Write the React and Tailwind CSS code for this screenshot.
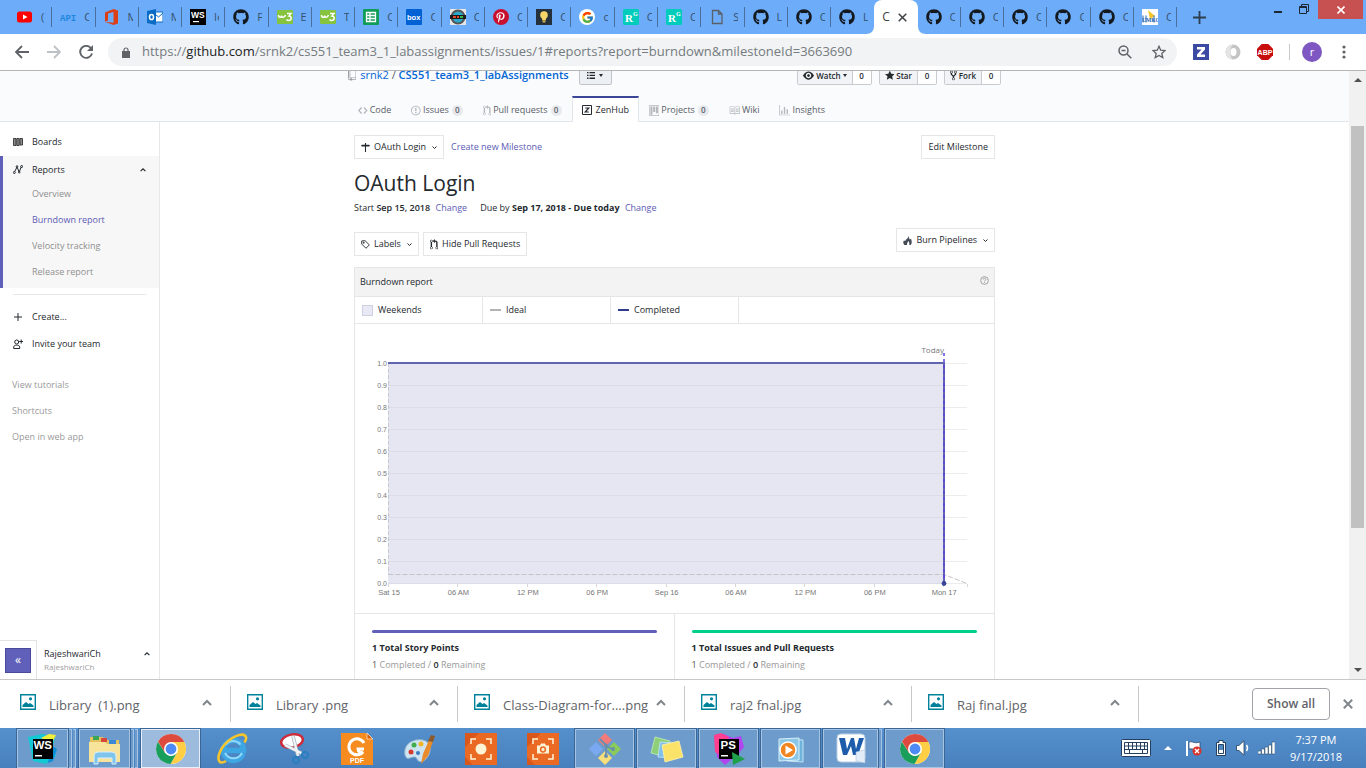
import React from "react";
import { FaGithub, FaPinterestP } from "react-icons/fa";
import { FcGoogle } from "react-icons/fc";

const OCT = {
  repo: [12, "M4 9H3V8h1v1zm0-3H3v1h1V6zm0-2H3v1h1V4zm0-2H3v1h1V2zm8-1v12c0 .55-.45 1-1 1H6v2l-1.5-1.5L3 16v-2H1c-.55 0-1-.45-1-1V1c0-.55.45-1 1-1h10c.55 0 1 .45 1 1zm-1 10H1v2h2v-1h3v1h5v-2zm0-10H2v9h9V1z"],
  code: [14, "M9.5 3L8 4.5 11.5 8 8 11.5 9.5 13 14 8 9.5 3zm-5 0L0 8l4.5 5L6 11.5 2.5 8 6 4.5 4.5 3z"],
  issue: [14, "M7 2.3c3.14 0 5.7 2.56 5.7 5.7s-2.56 5.7-5.7 5.7A5.71 5.71 0 0 1 1.3 8c0-3.14 2.56-5.7 5.7-5.7zM7 1C3.14 1 0 4.14 0 8s3.14 7 7 7 7-3.14 7-7-3.14-7-7-7zm1 3H6v5h2V4zm0 6H6v2h2v-2z"],
  pull: [12, "M11 11.28V5c-.03-.78-.34-1.47-.94-2.06C9.46 2.35 8.78 2.03 8 2H7V0L4 3l3 3V4h1c.27.02.48.11.69.31.21.2.3.42.31.69v6.28A1.993 1.993 0 0 0 10 15a1.993 1.993 0 0 0 1-3.72zm-1 2.92c-.66 0-1.2-.55-1.2-1.2 0-.65.55-1.2 1.2-1.2.65 0 1.2.55 1.2 1.2 0 .65-.55 1.2-1.2 1.2zM4 3c0-1.11-.89-2-2-2a1.993 1.993 0 0 0-1 3.72v6.56A1.993 1.993 0 0 0 2 15a1.993 1.993 0 0 0 1-3.72V4.72c.59-.34 1-.98 1-1.72zm-.8 10c0 .66-.55 1.2-1.2 1.2-.65 0-1.2-.55-1.2-1.2 0-.65.55-1.2 1.2-1.2.65 0 1.2.55 1.2 1.2zM2 4.2C1.34 4.2.8 3.65.8 3c0-.65.55-1.2 1.2-1.2.65 0 1.2.55 1.2 1.2 0 .65-.55 1.2-1.2 1.2z"],
  project: [15, "M10 12h3V2h-3v10zm-4-2h3V2H6v8zm-4 4h3V2H2v12zm-1 1h13V1H1v14zM14 0H1a1 1 0 0 0-1 1v14a1 1 0 0 0 1 1h13a1 1 0 0 0 1-1V1a1 1 0 0 0-1-1z"],
  book: [16, "M3 5h4v1H3V5zm0 3h4V7H3v1zm0 2h4V9H3v1zm11-5h-4v1h4V5zm0 2h-4v1h4V7zm0 2h-4v1h4V9zm2-6v9c0 .55-.45 1-1 1H9.5l-1 1-1-1H2c-.55 0-1-.45-1-1V3c0-.55.45-1 1-1h5.5l1 1 1-1H15c.55 0 1 .45 1 1zm-8 .5L7.5 3H2v9h6V3.5zm7-.5H9.5l-.5.5V12h6V3z"],
  graph: [16, "M16 14v1H0V0h1v14h15zM5 13H3V8h2v5zm4 0H7V3h2v10zm4 0h-2V6h2v7z"],
  eye: [16, "M8.06 2C3 2 0 8 0 8s3 6 8.06 6C13 14 16 8 16 8s-3-6-7.94-6zM8 12c-2.2 0-4-1.78-4-4 0-2.2 1.8-4 4-4 2.22 0 4 1.8 4 4 0 2.22-1.78 4-4 4zm2-4c0 1.11-.89 2-2 2-1.11 0-2-.89-2-2 0-1.11.89-2 2-2 1.11 0 2 .89 2 2z"],
  star: [14, "M14 6l-4.9-.64L7 1 4.9 5.36 0 6l3.6 3.26L2.67 14 7 11.67 11.33 14l-.93-4.74z"],
  fork: [10, "M8 1a1.993 1.993 0 0 0-1 3.72V6L5 8 3 6V4.72A1.993 1.993 0 0 0 2 1a1.993 1.993 0 0 0-1 3.72V6.5l3 3v1.78A1.993 1.993 0 0 0 5 15a1.993 1.993 0 0 0 1-3.72V9.5l3-3V4.72A1.993 1.993 0 0 0 8 1zM2 4.2C1.34 4.2.8 3.65.8 3c0-.65.55-1.2 1.2-1.2.65 0 1.2.55 1.2 1.2 0 .65-.55 1.2-1.2 1.2zm3 10c-.66 0-1.2-.55-1.2-1.2 0-.65.55-1.2 1.2-1.2.65 0 1.2.55 1.2 1.2 0 .65-.55 1.2-1.2 1.2zm3-10c-.66 0-1.2-.55-1.2-1.2 0-.65.55-1.2 1.2-1.2.65 0 1.2.55 1.2 1.2 0 .65-.55 1.2-1.2 1.2z"],
};

function Oct({ name, className = "" }) {
  const [w, d] = OCT[name];
  return (
    <svg viewBox={`0 0 ${w} 16`} className={`h-[11px] shrink-0 ${className}`} fill="currentColor" aria-hidden="true">
      <path d={d} fillRule={name === "project" ? "evenodd" : "nonzero"} />
    </svg>
  );
}

function Chevron({ up = false, className = "h-[5px] w-[5px]" }) {
  return (
    <svg viewBox="0 0 10 10" className={`shrink-0 ${className}`} fill="none" stroke="currentColor" strokeWidth="2" aria-hidden="true">
      <path d={up ? "M1 7l4-4 4 4" : "M1 3l4 4 4-4"} />
    </svg>
  );
}

/* ---------- browser tabs ---------- */

const Octocat = () => <FaGithub className="h-4 w-4 text-[#14191f]" />;

function Fav({ kind }) {
  if (kind === "git") return <Octocat />;
  if (kind === "google")
    return (
      <span className="flex h-4 w-4 items-center justify-center rounded-full bg-white">
        <FcGoogle className="h-[13px] w-[13px]" />
      </span>
    );
  if (kind === "pin")
    return (
      <span className="flex h-4 w-4 items-center justify-center rounded-full bg-[#c8102e] text-white">
        <FaPinterestP className="h-[11px] w-[11px]" />
      </span>
    );
  const art = {
    yt: (
      <>
        <rect x="0" y="2.5" width="15" height="11" rx="2.5" fill="#f00" />
        <path d="M6 5.5l4.5 2.5L6 10.5z" fill="#fff" />
      </>
    ),
    api: <text x="0" y="11.5" fontSize="9" fontWeight="700" fontFamily="Liberation Mono, monospace" fill="#1d86e0">API</text>,
    office: <path d="M1 3.5L9.500 0 14 1.500v13L9.500 16 1 12.800l8.500 1V3L4 4.400v7L1 12.800z" fill="#dc3e15" />,
    outlook: (
      <>
        <rect x="7" y="3" width="9" height="10" fill="#fff" stroke="#0a6cc4" />
        <path d="M8 5l3.5 3L16 4" stroke="#0a6cc4" fill="none" />
        <path d="M0 2l9-2v16l-9-2z" fill="#0a6cc4" />
        <ellipse cx="4.5" cy="8" rx="2" ry="2.6" fill="none" stroke="#fff" strokeWidth="1.5" />
      </>
    ),
    ws: (
      <>
        <rect width="16" height="16" fill="#000" />
        <text x="1" y="8.5" fontSize="8.5" fontWeight="700" fontFamily="Liberation Sans, sans-serif" fill="#fff">WS</text>
        <rect x="3" y="12" width="6" height="1.2" fill="#fff" />
      </>
    ),
    w3: (
      <>
        <rect y="1" width="16" height="14" rx="1" fill="#86c440" />
        <path d="M1.5 6c0 3 3 3 3 .5 0 2.500 3 2.500 4-.5" fill="none" stroke="#fff" strokeWidth="1.500" />
        <path d="M10 4.5h4L12 7c3 0 3 4.500-.5 4.500-1 0-1.500-.5-2-1" fill="none" stroke="#fff" strokeWidth="1.500" />
      </>
    ),
    sheet: (
      <>
        <rect width="16" height="16" rx="1" fill="#109d58" />
        <path d="M3.5 3.5h9v9h-9zM3.5 6.5h9M3.5 9.5h9M7 3.5v9" stroke="#fff" strokeWidth="1.3" fill="none" />
      </>
    ),
    box: (
      <>
        <rect width="16" height="16" rx="1" fill="#0061d5" />
        <text x="1" y="11" fontSize="7.5" fontWeight="700" fontFamily="Liberation Sans, sans-serif" fill="#fff">box</text>
      </>
    ),
    badge: (
      <>
        <rect width="16" height="16" fill="#e8e8e8" />
        <circle cx="8" cy="8" r="7.5" fill="#555" />
        <circle cx="8" cy="8" r="5.5" fill="#2aa7c9" />
        <rect x="0" y="6" width="16" height="4" fill="#1c1c1c" />
        <path d="M3 8h3M7 8h2" stroke="#e04a2a" strokeWidth="2" />
        <path d="M10 8h3" stroke="#3db54a" strokeWidth="2" />
      </>
    ),
    bulb: (
      <>
        <rect width="16" height="16" fill="#24303c" />
        <circle cx="8" cy="6" r="3.8" fill="#f6d568" />
        <path d="M5.5 8.5h5l-1 3h-3z" fill="#f6d568" />
        <rect x="6.5" y="11.5" width="3" height="2" fill="#c8a850" />
      </>
    ),
    rg: (
      <>
        <rect width="16" height="16" rx="1.5" fill="#00ccbb" />
        <text x="2" y="13" fontSize="11" fontWeight="700" fontFamily="Liberation Serif, serif" fill="#fff">R</text>
        <text x="10" y="7" fontSize="6" fontWeight="700" fontFamily="Liberation Serif, serif" fill="#fff">G</text>
      </>
    ),
    file: <path d="M3.5 1.5h6l3.5 3.5v9.5h-9.500zM9.500 1.500V5H13" fill="none" stroke="#5a6068" strokeWidth="1.300" />,
    umkc: (
      <>
        <rect width="16" height="16" fill="#fff" />
        <path d="M6 1l7 6-5 3z" fill="#f5c62a" />
        <text x="0" y="13" fontSize="5.5" fontWeight="700" fontFamily="Liberation Serif, serif" fill="#1f63b0">UMKC</text>
        <path d="M1 6.500v7M4 6.500v7M12 6.500v7" stroke="#1f63b0" />
      </>
    ),
  }[kind];
  return (
    <svg viewBox="0 0 16 16" className="h-4 w-4 overflow-hidden" aria-hidden="true">
      {art}
    </svg>
  );
}

const TABS = [
  ["yt", "("], ["api", "C"], ["office", "M"], ["outlook", "M"], ["ws", "Id"], ["git", "F"], ["w3", "E"], ["w3", "T"],
  ["sheet", "C"], ["box", "C"], ["badge", "C"], ["pin", "C"], ["bulb", "C"], ["google", "c"], ["rg", "C"], ["rg", "C"],
  ["file", "S"], ["git", "L"], ["git", "C"], ["git", "L"], ["active", "C"], ["git", "C"], ["git", "C"], ["git", "C"],
  ["git", "C"], ["git", "C"], ["umkc", "C"],
];

function TabStrip() {
  return (
    <header className="flex h-[34px] shrink-0 bg-[#6cacf8]">
      <div role="tablist" className="flex min-w-0 flex-1 pl-[9px]">
        {TABS.map(([kind, label], i) =>
          kind === "active" ? (
            <div key={i} className="relative flex min-w-0 flex-1 items-center gap-2 rounded-t-lg bg-white pl-2 text-[12px] text-[#3c4043]">
              <svg viewBox="0 0 8 8" className="absolute bottom-0 -left-2 h-2 w-2" aria-hidden="true"><path d="M8 0v8H0c5 0 8-3 8-8z" fill="#fff" /></svg>
              <svg viewBox="0 0 8 8" className="absolute -right-2 bottom-0 h-2 w-2" aria-hidden="true"><path d="M0 0v8h8C3 8 0 5 0 0z" fill="#fff" /></svg>
              <button role="tab" aria-selected="true" className="w-2 text-left">{label}</button>
              <button aria-label="Close tab">
                <svg viewBox="0 0 9 9" className="h-[9px] w-[9px]" stroke="#3c4043" strokeWidth="1.5"><path d="M.7.7l7.6 7.6M8.3.7L.7 8.3" /></svg>
              </button>
            </div>
          ) : (
            <button key={i} role="tab" aria-selected="false" className="flex min-w-0 flex-1 items-center pl-2">
              <span className="shrink-0"><Fav kind={kind} /></span>
              <span className="ml-2 w-[5px] overflow-hidden text-left text-[11px] text-[#37506e]">{label}</span>
              <span className={i === 19 ? "hidden" : "ml-auto h-[20px] w-px bg-[#4a6f9e]"} />
            </button>
          )
        )}
      </div>
      <div className="flex w-[189px] shrink-0 items-start">
        <button aria-label="New tab" className="mt-[11px] ml-4">
          <svg viewBox="0 0 13 13" className="h-[13px] w-[13px]" stroke="#2c3e50" strokeWidth="1.8"><path d="M6.5 0v13M0 6.5h13" /></svg>
        </button>
        <button aria-label="Minimize" className="ml-auto pt-[11px]"><span className="block h-[2px] w-2 bg-[#1c2836]" /></button>
        <button aria-label="Restore" className="ml-[17px] pt-1">
          <svg viewBox="0 0 10 10" className="h-[10px] w-[10px]" fill="none" stroke="#1c2836"><path d="M.5 2.5h7v7h-7zM.5 3.5h7M2.5 2V.5h7v7H8" /></svg>
        </button>
        <button aria-label="Close" className="mr-[3px] ml-[9px] flex h-[19px] w-[45px] items-center justify-center bg-[#c75050]">
          <svg viewBox="0 0 8 8" className="h-2 w-2" stroke="#fff" strokeWidth="1.6"><path d="M.5.5l7 7M7.5.5l-7 7" /></svg>
        </button>
      </div>
    </header>
  );
}

function Toolbar() {
  return (
    <div className="flex h-[37px] shrink-0 items-center border-b border-[#b5b5b5] bg-white pr-5 pl-[15px] text-[#5f6368]">
      <button aria-label="Back">
        <svg viewBox="0 0 14 14" className="h-[14px] w-[14px]" fill="none" stroke="#5f6368" strokeWidth="1.8"><path d="M14 7H1.5M7 1L1 7l6 6" /></svg>
      </button>
      <button aria-label="Forward" className="ml-[18px]">
        <svg viewBox="0 0 14 14" className="h-[14px] w-[14px]" fill="none" stroke="#bdc1c6" strokeWidth="1.8"><path d="M0 7h12.5M7 1l6 6-6 6" /></svg>
      </button>
      <button aria-label="Reload" className="ml-[18px]">
        <svg viewBox="0 0 14 14" className="h-[14px] w-[14px]" fill="none"><path d="M11.8 3A6 6 0 1 0 13 8.5" stroke="#5f6368" strokeWidth="1.9" /><path d="M14 0v6H8z" fill="#5f6368" /></svg>
      </button>
      <div className="ml-[15px] flex h-7 min-w-0 flex-1 items-center rounded-full bg-[#f1f3f4] pr-[11px] pl-[14px]">
        <svg viewBox="0 0 8 11" className="h-[11px] w-2 shrink-0" aria-hidden="true"><path d="M0 4h8v7H0z" fill="#5f6368" /><path d="M2 4.5V3a2 2 0 0 1 4 0v1.5" fill="none" stroke="#5f6368" strokeWidth="1.2" /></svg>
        <p className="ml-3 min-w-0 flex-1 overflow-hidden text-[13px] whitespace-nowrap text-[#757b80]">
          https://<span className="text-[#202124]">github.com</span>/srnk2/cs551_team3_1_labassignments/issues/1#reports?report=burndown&amp;milestoneId=3663690
        </p>
        <button aria-label="Zoom">
          <svg viewBox="0 0 14 14" className="h-[14px] w-[14px]" fill="none" stroke="#5f6368" strokeWidth="1.5"><circle cx="5.5" cy="5.5" r="4.5" /><path d="M9 9l4.3 4.3M3.5 5.5h4" /></svg>
        </button>
        <button aria-label="Bookmark" className="ml-5">
          <svg viewBox="0 0 14 14" className="h-[14px] w-[14px]" fill="none" stroke="#5f6368" strokeWidth="1.3"><path d="M7 1.3l1.7 3.9 4.3.4-3.2 2.8 1 4.2L7 10.4l-3.8 2.2 1-4.2L1 5.6l4.3-.4z" /></svg>
        </button>
      </div>
      <button aria-label="ZenHub extension" className="ml-4">
        <svg viewBox="0 0 16 16" className="h-4 w-4"><rect width="16" height="16" fill="#3b4aa3" /><path d="M4 3h8v2.400L7.500 10.500H12V13H4v-2.400L8.500 5.500H4z" fill="#fff" /></svg>
      </button>
      <button aria-label="Extension" className="ml-4">
        <svg viewBox="0 0 16 16" className="h-4 w-4"><circle cx="8" cy="8" r="7.5" fill="#c4c4c4" /><path d="M8 .5a7.500 7.500 0 0 0 0 15c-3-1-4-12 0-15z" fill="#e4e4e4" /><ellipse cx="8.500" cy="8" rx="3" ry="4" fill="#fff" /></svg>
      </button>
      <button aria-label="AdBlock Plus" className="ml-4">
        <svg viewBox="0 0 16 16" className="h-4 w-4"><path d="M4.7 0h6.600L16 4.700v6.600L11.300 16H4.700L0 11.300V4.700z" fill="#c70d0d" /><text x="8" y="10.500" textAnchor="middle" fontSize="7" fontWeight="700" fontFamily="Liberation Sans, sans-serif" fill="#fff">ABP</text></svg>
      </button>
      <span className="ml-4 h-4 w-px bg-[#c8cacc]" />
      <button className="ml-3 h-5 w-5 rounded-full bg-[#7e57c2] text-[11px] leading-5 text-white">r</button>
      <button aria-label="Menu" className="ml-5">
        <svg viewBox="0 0 4 14" className="h-[14px] w-1" fill="#5f6368"><circle cx="2" cy="2" r="1.6" /><circle cx="2" cy="7" r="1.6" /><circle cx="2" cy="12" r="1.6" /></svg>
      </button>
    </div>
  );
}

/* ---------- repository header ---------- */

function SocialButton({ icon, label, caret }) {
  return (
    <div className="flex h-[19px] rounded-[2px] border border-[#c9cbcf] bg-white text-[8px] font-semibold text-[#24292e]">
      <button className="flex items-center gap-[2px] border-r border-[#c9cbcf] bg-[#f1f3f6] px-[5px]">
        <Oct name={icon} className="-my-1" />
        {label}
        {caret && <span className="border-x-[2px] border-t-[3px] border-x-transparent border-t-current" />}
      </button>
      <a href="#count" className="flex w-[18px] items-center justify-center">0</a>
    </div>
  );
}

const NAV = [
  ["code", "Code"], ["issue", "Issues", 0], ["pull", "Pull requests", 0], ["zen", "ZenHub"],
  ["project", "Projects", 0], ["book", "Wiki"], ["graph", "Insights"],
];

function RepoHeader() {
  return (
    <div className="shrink-0 border-b border-[#e1e4e8] bg-[#fafbfc] px-3">
      <div className="mx-auto max-w-[653px]">
        <div className="flex h-[14px] items-end overflow-hidden">
          <Oct name="repo" className="mb-1 text-[#9a9ea3]" />
          <h2 className="ml-1 text-[11px] leading-[20px] text-[#0366d6]">
            <a href="#owner">srnk2</a> <span className="text-[#586069]">/</span> <a href="#repo" className="font-semibold">CS551_team3_1_labAssignments</a>
          </h2>
          <button aria-label="Lists" className="ml-[10px] flex h-[19px] w-[33px] items-center justify-center gap-1 rounded-[2px] border border-[#c0c4ca] bg-[#eceff4] text-[#24292e]">
            <svg viewBox="0 0 8 7" className="h-[7px] w-2" fill="currentColor"><path d="M0 0h1.500v1.300H0zM2.500 0H8v1.300H2.500zM0 2.800h1.500v1.300H0zM2.500 2.800H8v1.300H2.500zM0 5.600h1.500v1.300H0zM2.500 5.600H8v1.300H2.500z" /></svg>
            <span className="border-x-[2px] border-t-[3px] border-x-transparent border-t-current" />
          </button>
          <div className="ml-auto flex gap-[7px]">
            <SocialButton icon="eye" label="Watch" caret />
            <SocialButton icon="star" label="Star" />
            <SocialButton icon="fork" label="Fork" />
          </div>
        </div>
        <nav className="mt-[11px] -mb-px flex h-[26px] text-[9px] text-[#586069]">
          {NAV.map(([icon, label, count]) => (
            <a
              key={label}
              href={`#${label}`}
              className={
                icon === "zen"
                  ? "flex items-center gap-1 border-x border-t-2 border-x-[#e1e4e8] border-t-[#3b4796] bg-white px-[9px] text-[#24292e]"
                  : "flex items-center gap-[2px] px-[10px] pt-[2px]"
              }
            >
              {icon === "zen" ? (
                <svg viewBox="0 0 10 10" className="h-[10px] w-[10px]"><path d="M.5.5h9v9h-9z" fill="none" stroke="#24292e" /><path d="M3.2 3h3.600L3.200 7h3.600" fill="none" stroke="#24292e" strokeWidth="1.200" /></svg>
              ) : (
                <Oct name={icon} className="text-[#b4b8bd]" />
              )}
              {label}
              {count !== undefined && <span className="ml-px flex h-[11px] w-[11px] items-center justify-center rounded-full bg-[#e7e9ec] text-[8px] font-semibold">{count}</span>}
            </a>
          ))}
        </nav>
      </div>
    </div>
  );
}

/* ---------- ZenHub sidebar ---------- */

function Sidebar() {
  const row = "flex h-[27px] w-full items-center gap-[9px] pl-[13px] text-left";
  return (
    <aside className="flex w-40 shrink-0 flex-col border-r border-[#e8e8e8] bg-white pt-[6px] text-[9px] text-[#24292e]">
      <a href="#boards" className={row}>
        <svg viewBox="0 0 10 8" className="h-2 w-[10px]" fill="#8b8b8b" stroke="#333" strokeWidth=".9"><path d="M.5.5h2.500v7H.5zM3.800.5h2.400v7H3.800zM7 .5h2.500v6.500H7z" /></svg>
        Boards
      </a>
      <section className="mt-px border-l-3 border-[#6060ba] bg-[#f7f7f7] pb-[3px]">
        <button className="flex h-[25px] w-full items-center pt-[2px] pr-[13px] pl-[10px]">
          <svg viewBox="0 0 10 9" className="h-[9px] w-[10px]" fill="none" stroke="#24292e"><path d="M1.8 6.500L4 2l2.200 5 2-5" /><circle cx="1.300" cy="7.500" r="1" /><circle cx="4" cy="1.500" r=".8" /><circle cx="6.300" cy="7.200" r=".8" /><circle cx="8.700" cy="1.500" r="1" /></svg>
          <span className="ml-[9px]">Reports</span>
          <Chevron up className="ml-auto h-[6px] w-[6px]" />
        </button>
        <ul className="pl-[29px] leading-[26px] text-[#8f8f8f]">
          <li><a href="#overview">Overview</a></li>
          <li><a href="#burndown" className="text-[#5d5bb5]">Burndown report</a></li>
          <li><a href="#velocity">Velocity tracking</a></li>
          <li><a href="#release">Release report</a></li>
        </ul>
      </section>
      <hr className="mx-[13px] mt-[6px] mb-2 border-[#e8e8e8]" />
      <button className={row}>
        <svg viewBox="0 0 10 10" className="h-[10px] w-[10px]" stroke="#24292e"><path d="M5 1v8M1 5h8" /></svg>
        Create...
      </button>
      <button className={row}>
        <svg viewBox="0 0 10 10" className="h-[10px] w-[10px]" fill="none" stroke="#24292e"><circle cx="3.7" cy="3" r="2" /><path d="M.7 9.500V8c0-2.500 6-2.500 6 0v1.500zM8.200.5v4M6.200 2.500h4" /></svg>
        Invite your team
      </button>
      <ul className="mt-[15px] pl-3 leading-[26px] text-[#9a9a9a]">
        <li><a href="#tutorials">View tutorials</a></li>
        <li><a href="#shortcuts">Shortcuts</a></li>
        <li><a href="#webapp">Open in web app</a></li>
      </ul>
      <div className="mt-auto flex h-[39px] items-stretch">
        <div className="flex w-[37px] items-center justify-center border-t border-r border-[#e3e3e3]">
          <button aria-label="Collapse sidebar" className="flex h-[25px] w-[26px] items-center justify-center border border-[#4a4a9c] bg-[#6060ba] text-[12px] text-white">«</button>
        </div>
        <button className="flex flex-1 items-center justify-between pr-[9px] pl-[7px] text-left">
          <span className="leading-[13px]">RajeshwariCh<span className="block text-[8px] leading-[13px] text-[#a0a0a0]">RajeshwariCh</span></span>
          <Chevron up className="mb-3 h-[6px] w-[6px]" />
        </button>
      </div>
    </aside>
  );
}

/* ---------- burndown report ---------- */

const X_LABELS = ["Sat 15", "06 AM", "12 PM", "06 PM", "Sep 16", "06 AM", "12 PM", "06 PM", "Mon 17"];
const Y_LABELS = ["1.0", "0.9", "0.8", "0.7", "0.6", "0.5", "0.4", "0.3", "0.2", "0.1", "0.0"];

function Chart() {
  return (
    <svg viewBox="0 0 639 289" className="block h-auto w-full" fontFamily="Liberation Sans, Arial, sans-serif" fontSize="7" fill="#777">
      <rect x="33" y="39" width="556" height="220" fill="#e6e6f2" />
      {Y_LABELS.map((t, i) => (
        <g key={t}>
          <path d={`M33 ${39.5 + i * 22}H589`} stroke="#dcdce8" />
          <path d={`M589 ${39.5 + i * 22}H612`} stroke="#ececec" />
          <text x="32" y={41.5 + i * 22} textAnchor="end">{t}</text>
        </g>
      ))}
      {X_LABELS.map((t, i) => (
        <g key={i}>
          <path d={`M${Math.round(33 + i * 69.4) + 0.5} 260v3`} stroke="#d8d8d8" />
          <text x={34 + i * 69.4} y="271" textAnchor="middle" fontSize="7.5">{t}</text>
        </g>
      ))}
      <path d="M612.5 260v3" stroke="#d8d8d8" />
      <path d="M33.5 39v211.5" fill="none" stroke="#c8c8d0" strokeDasharray="4 2" />
      <path d="M33.5 250.500H589l23 9" fill="none" stroke="#c4c4c8" strokeDasharray="5 2" />
      <path d="M33 39H589V259" fill="none" stroke="#6165b0" strokeWidth="2" />
      <path d="M589 29V259" stroke="#5b3fe0" strokeWidth="2" strokeDasharray="3 3" opacity=".75" />
      <circle cx="589" cy="259.5" r="2.4" fill="#3b4796" />
      <text x="589" y="29" textAnchor="end" fontSize="8" fontFamily="Open Sans, sans-serif">Today</text>
    </svg>
  );
}

function Stat({ total, bar }) {
  return (
    <div className="px-[17px] pt-4 pb-5">
      <div className={`h-[3px] rounded-sm ${bar}`} />
      <h3 className="mt-[6px] text-[9px] leading-[17px] font-bold text-[#24292e]">{total}</h3>
      <p className="text-[9px] leading-[17px] text-[#999]">
        <span className="text-[#555]">1</span> Completed / <b className="font-semibold text-[#24292e]">0</b> Remaining
      </p>
    </div>
  );
}

function Main() {
  const btn = "flex h-6 items-center gap-1 border border-[#e6e6e6] bg-white px-[6px] text-[#24292e]";
  const legend = "flex w-32 items-center gap-[5px] border-r border-[#e6e6e6] px-[7px]";
  return (
    <main className="min-w-0 flex-1 overflow-hidden pr-40 text-[9px] text-[#24292e]">
      <div className="mx-auto max-w-[641px] pt-[13px]">
        <div className="flex items-center">
          <button className={btn}>
            <svg viewBox="0 0 10 10" className="h-[9px] w-[9px]" fill="#24292e"><path d="M4.4 0h1.200v2H9L10 3 9 4H5.600v6H4.400V4H1L0 3l1-1h3.400z" /></svg>
            <span className="mr-[2px]">OAuth Login</span>
            <Chevron />
          </button>
          <a href="#new" className="ml-[7px] text-[#5d5bb5]">Create new Milestone</a>
          <button className={`${btn} ml-auto`}>Edit Milestone</button>
        </div>
        <h1 className="mt-2 text-[21px] leading-8">OAuth Login</h1>
        <div className="flex h-[18px] items-center gap-[13px]">
          <span>Start <b className="font-semibold">Sep 15, 2018</b> <a href="#start" className="ml-[3px] text-[#5d5bb5]">Change</a></span>
          <span>Due by <b className="font-bold">Sep 17, 2018 - Due today</b> <a href="#due" className="ml-[3px] text-[#5d5bb5]">Change</a></span>
        </div>
        <div className="mt-[11px] flex h-7 items-start gap-1">
          <button className={`${btn} self-end`}>
            <svg viewBox="0 0 10 10" className="h-[9px] w-[9px]" fill="none" stroke="#24292e"><path d="M.8 1v3.500l4.700 4.700 3.800-3.700L4.600.8zM2.500 2.500h1v1h-1z" /></svg>
            <span className="mr-[2px]">Labels</span>
            <Chevron />
          </button>
          <button className={`${btn} self-end`}>
            <Oct name="pull" />
            Hide Pull Requests
          </button>
          <button className={`${btn} ml-auto`}>
            <svg viewBox="0 0 10 10" className="h-[9px] w-[9px]" fill="#444d56"><path d="M6.500 0c.3 2 .5 3 1 4L9 3c1 3 1 5.500-.5 7H7c.3-2-.2-3-1-4.500C5 7 4.300 8 4.500 10H1.500C0 8 0 6.500 1 5l1.500.5C3 3.500 6 2.500 6.500 0z" /></svg>
            <span className="mr-[2px]">Burn Pipelines</span>
            <Chevron />
          </button>
        </div>
        <section className="mt-[11px] border border-[#e6e6e6]">
          <div className="flex h-[29px] items-center justify-between border-b border-[#e6e6e6] bg-[#f3f3f3] px-[5px]">
            <h2>Burndown report</h2>
            <button aria-label="Help" className="mb-1">
              <svg viewBox="0 0 10 10" className="h-[9px] w-[9px]" fill="none" stroke="#999"><circle cx="5" cy="5" r="4.3" /><path d="M3.5 4c0-2 3-2 3 0 0 1-1.500 1-1.500 2M5 6.800v1" /></svg>
            </button>
          </div>
          <div className="flex h-[27px] border-b border-[#e6e6e6]">
            <div className={legend}><span className="h-[11px] w-[11px] border border-[#cfcfe4] bg-[#e9e9f5]" />Weekends</div>
            <div className={legend}><span className="h-[2px] w-[11px] bg-[#b4b4b4]" />Ideal</div>
            <div className={legend}><span className="h-[2px] w-[11px] bg-[#323c8c]" />Completed</div>
          </div>
          <Chart />
          <div className="grid grid-cols-2 divide-x divide-[#e6e6e6] border-t border-[#e6e6e6]">
            <Stat total="1 Total Story Points" bar="bg-[#6060ba]" />
            <Stat total="1 Total Issues and Pull Requests" bar="bg-[#00d08a]" />
          </div>
        </section>
      </div>
    </main>
  );
}

function ScrollRail() {
  return (
    <div className="flex w-[17px] shrink-0 flex-col items-center bg-[#f1f1f1]" aria-hidden="true">
      <span className="mt-[7px] border-x-4 border-b-4 border-x-transparent border-b-[#505050]" />
      <span className="mt-11 h-[402px] w-[13px] bg-[#c1c1c1]" />
      <span className="mt-auto mb-[7px] border-x-4 border-t-4 border-x-transparent border-t-[#505050]" />
    </div>
  );
}

/* ---------- downloads shelf ---------- */

const FILES = ["Library  (1).png", "Library .png", "Class-Diagram-for....png", "raj2 fnal.jpg", "Raj final.jpg"];

function Downloads() {
  return (
    <footer className="flex h-[49px] shrink-0 items-center border-t border-[#c8c8c8] bg-white pl-1">
      {FILES.map((f) => (
        <div key={f} className="flex h-9 w-[227px] items-center border-r border-[#c8c8c8] pr-[18px] pl-4">
          <svg viewBox="0 0 16 16" className="mb-[4px] h-4 w-4 shrink-0" aria-hidden="true"><path d="M.7.7h14.600v14.600H.7z" fill="#fff" stroke="#00829b" strokeWidth="1.400" /><path d="M2.500 13v-2L6 8l2.500 2 1.500-1 3.500 2.500V13z" fill="#00829b" /><circle cx="10.500" cy="4.800" r="1.600" fill="#00829b" /></svg>
          <button className="ml-[13px] min-w-0 flex-1 pt-1 text-left text-[13px] whitespace-pre text-[#5f6368]">{f}</button>
          <button aria-label={`Options for ${f}`} className="mb-[2px] text-[#80868b]"><Chevron up className="h-[10px] w-[10px]" /></button>
        </div>
      ))}
      <button className="ml-auto h-8 w-[78px] rounded-[4px] border border-[#a0a4a8] text-[12px] font-semibold text-[#5f6368]">Show all</button>
      <button aria-label="Close downloads bar" className="mr-[13px] ml-[13px]">
        <svg viewBox="0 0 10 10" className="h-[10px] w-[10px]" stroke="#80868b" strokeWidth="2"><path d="M.8.8l8.400 8.400M9.200.8L.8 9.200" /></svg>
      </button>
    </footer>
  );
}

/* ---------- Windows taskbar ---------- */

const Chrome = () => (
  <>
    <circle cx="16" cy="16" r="15" fill="#fff" />
    <path d="M16 9h13.300A15 15 0 0 1 15.500 31l6.600-11.500z" fill="#ffce44" />
    <path d="M2.900 8.700L9.900 19.500 16 23l6-3.500L15.500 31A15 15 0 0 1 2.900 8.700z" fill="#1a9e5b" />
    <path d="M3 8.500A15 15 0 0 1 29.300 9H16l-6.100 10.500z" fill="#dd4b3e" />
    <circle cx="16" cy="16" r="7" fill="#fff" />
    <circle cx="16" cy="16" r="5.4" fill="#4c8bf5" />
  </>
);

const APPS = [
  { name: "WebStorm", open: true, stack: 2, art: (
    <>
      <path d="M1 4l14-3 13 3-2 10 3 9-10 8-13-3z" fill="#14c8d4" /><path d="M14 5l8-4 7 1-4 8z" fill="#f2ee3c" /><path d="M24 12l6 4-4 12-5 2z" fill="#0a8fd8" />
      <rect x="6" y="6" width="20" height="20" fill="#000" /><text x="6.500" y="16" fontSize="11.500" fontWeight="700" fontFamily="Liberation Sans, sans-serif" fill="#fff">WS</text><rect x="8" y="22" width="7" height="1.500" fill="#fff" />
    </>
  ) },
  { name: "File Explorer", open: true, stack: 2, art: (
    <>
      <path d="M1 4h13l2 3h14v22H1z" fill="#e6c35f" /><path d="M4 3h6v4H4z" fill="#3aa757" /><path d="M12 5h6v4h-6z" fill="#d9463a" /><path d="M20 7h7v4h-7z" fill="#3b87d8" />
      <path d="M0 9h16l2 2h13v18H0z" fill="#f7e39a" /><path d="M5 31V23q0-4 4-4h14q4 0 4 4v8h-4v-6H9v6z" fill="#7fc4ea" stroke="#d6f0ff" />
    </>
  ) },
  { name: "Chrome", active: true, art: <Chrome /> },
  { name: "Internet Explorer", art: (
    <>
      <path d="M26 20.500a10 10 0 1 1 .5-3H9" fill="none" stroke="#3fa6e4" strokeWidth="5.500" />
      <path d="M25 20a9.500 9.500 0 0 1-17 0M8.500 11.500a10 10 0 0 1 15 0" fill="none" stroke="#8fd8fa" strokeWidth="2" />
      <path d="M9 28C1 33-1 25 5 15 12 4 27-2 29 4c.5 2-.5 4-1.500 5.500" fill="none" stroke="#f5c52e" strokeWidth="2.600" />
    </>
  ) },
  { name: "Snipping Tool", art: (
    <>
      <ellipse cx="13" cy="8" rx="11" ry="6.500" transform="rotate(-12 13 8)" fill="#fff" stroke="#cc2c3a" strokeWidth="2.500" />
      <path d="M6 12l18 9M14 3l5 20" stroke="#aeb8c2" strokeWidth="3.500" /><path d="M6 12l18 9M14 3l5 20" stroke="#f2f5f7" strokeWidth="2" /><circle cx="17" cy="27" r="3" fill="none" stroke="#2d7fc0" strokeWidth="2.500" /><circle cx="26" cy="22" r="3" fill="none" stroke="#2d7fc0" strokeWidth="2.500" />
    </>
  ) },
  { name: "Foxit PDF", art: (
    <>
      <path d="M0 0h25l7 7v25H0z" fill="#f68b1f" /><path d="M26 0l6 6h-6z" fill="#e06000" stroke="#fff" strokeWidth=".6" />
      <path d="M23 10a8 8 0 1 0-1 9c-2 1-5 0-5-3h6" fill="none" stroke="#fff" strokeWidth="3" /><text x="16" y="30" textAnchor="middle" fontSize="7" fontWeight="700" fontFamily="Liberation Sans, sans-serif" fill="#fff">PDF</text>
    </>
  ) },
  { name: "Paint", art: (
    <>
      <path d="M2 22C0 12 9 5 20 7c9 2 9 13 3 19-4 4-8 3-9 0s-4-2-7-1-4 0-5-3z" fill="#cfe4f2" stroke="#8fb2cc" />
      <circle cx="8" cy="19" r="2.5" fill="#d63a2e" /><circle cx="11" cy="12" r="2.500" fill="#3fae49" /><circle cx="18" cy="11" r="2.500" fill="#f0b429" /><circle cx="15" cy="20" r="2" fill="#3c7ac0" />
      <path d="M18 31l2-10 6-14 4 1-5 15z" fill="#e98a2b" /><path d="M25 8l3-6 4 1-2 6z" fill="#8a5a2e" />
    </>
  ) },
  { name: "Screen Recorder", art: (
    <>
      <rect width="32" height="32" fill="#ea6a23" /><path d="M0 14L14 0H0zM0 32v-8L8 32z" fill="#d9571a" /><circle cx="16" cy="16" r="5.5" fill="#fff3d6" />
      <path d="M6 11V6h5M21 6h5v5M26 21v5h-5M11 26H6v-5" fill="none" stroke="#fff3d6" strokeWidth="1.5" />
    </>
  ) },
  { name: "Screen Capture", art: (
    <>
      <rect width="32" height="32" fill="#ea6a23" /><path d="M0 14L14 0H0zM0 32v-8L8 32z" fill="#d9571a" /><path d="M10 12.5h3l1-2h4l1 2h3v8H10z" fill="#fff3d6" /><circle cx="16" cy="16.500" r="2.400" fill="#fff3d6" stroke="#ea6a23" strokeWidth="1.500" />
      <path d="M6 11V6h5M21 6h5v5M26 21v5h-5M11 26H6v-5" fill="none" stroke="#fff3d6" strokeWidth="1.5" />
    </>
  ) },
  { name: "Git", open: true, art: (
    <>
      <path d="M16 0l7 7-7 7-7-7z" fill="#f27a7a" /><path d="M7 9l7 7-7 7-7-7z" fill="#7aa9f2" /><path d="M25 9l7 7-7 7-7-7z" fill="#8acb5a" /><path d="M16 18l7 7-7 7-7-7z" fill="#f7e07a" />
      <path d="M11 6l6 6v11M17 13l6 3" stroke="#6b8fae" strokeWidth="1.800" fill="none" /><circle cx="17" cy="12.500" r="2" fill="#6b8fae" /><circle cx="17" cy="23" r="2" fill="#6b8fae" /><circle cx="24" cy="16" r="2" fill="#6b8fae" />
    </>
  ) },
  { name: "Sticky Notes", open: true, art: (
    <>
      <path d="M4 4l15 4-4 16-15-4z" fill="#8ed07a" stroke="#c4ecb4" strokeWidth=".8" /><path d="M9 9l14 1-2 15-14-1z" fill="#7fc0ea" stroke="#c6e6f8" strokeWidth=".8" /><path d="M11 12l17-4 4 16-18 5z" fill="#fbe36a" stroke="#fff3b0" strokeWidth=".8" />
    </>
  ) },
  { name: "PhpStorm", open: true, art: (
    <>
      <path d="M1 2l10-1 9 4 8-2 3 11-5 6-14 12-8-8z" fill="#b345f1" /><path d="M1 2l7-2 8 4-9 18-5-3z" fill="#ff3f8f" />
      <rect x="6" y="6" width="20" height="20" fill="#000" /><text x="7.500" y="16" fontSize="11.500" fontWeight="700" fontFamily="Liberation Sans, sans-serif" fill="#fff">PS</text><rect x="8" y="22" width="7" height="1.500" fill="#fff" /><path d="M19 19l13 7-12 6z" fill="#1fa04a" />
    </>
  ) },
  { name: "Media Player", open: true, art: (
    <>
      <path d="M12 6l16 1v22l-16-1z" fill="#6fb4dc" stroke="#c6e4f4" /><path d="M4 6l20-1v22L4 28z" fill="#8cc6e6" stroke="#d8effa" />
      <circle cx="13" cy="17" r="8" fill="#f08522" stroke="#fff" strokeWidth="1.5" /><path d="M10.500 12.500l7.500 4.500-7.500 4.500z" fill="#fff" />
    </>
  ) },
  { name: "Word", open: true, stack: 1, art: (
    <>
      <rect x="2" y="1" width="28" height="28" rx="4" fill="#fff" stroke="#b9cfe6" /><path d="M4 5h6l2 11 4-11h3l2 11 3-11h5l-6 17h-5l-2-9-4 9H8z" fill="#1d5cab" /><path d="M21 19l9-2v13l-9-2z" fill="#e3edf7" stroke="#a9c1dc" strokeWidth=".6" />
    </>
  ) },
  { name: "Chrome", open: true, art: <Chrome /> },
];

function Taskbar() {
  return (
    <div className="flex h-10 shrink-0 items-stretch bg-gradient-to-b from-[#5590cc] to-[#4880bd] pl-[17px]">
      <div className="flex gap-[3px]">
        {APPS.map((a, i) => (
          <div key={i} className="flex w-[59px] pt-px">
            <button
              aria-label={a.name}
              className={
                a.active
                  ? "flex min-w-0 flex-1 items-center justify-center border border-[#e6f0fa] bg-[#9dbbdc] outline outline-[#3a6698]"
                  : a.open
                  ? "flex min-w-0 flex-1 items-center justify-center border border-[#a5c3e2] bg-[#6d9bcb] outline outline-[#3a6698]"
                  : "flex min-w-0 flex-1 items-center justify-center"
              }
            >
              <svg viewBox="0 0 32 32" className="h-8 w-8 overflow-visible" aria-hidden="true">{a.art}</svg>
            </button>
            {a.stack >= 1 && <span className="ml-px w-[3px] border-y border-r border-[#a5c3e2] bg-[#6d9bcb]" />}
            {a.stack >= 2 && <span className="ml-px w-[3px] border-y border-r border-[#a5c3e2] bg-[#6d9bcb]" />}
          </div>
        ))}
      </div>
      <div className="ml-auto flex items-center pr-6 text-white">
        <button aria-label="Touch keyboard">
          <svg viewBox="0 0 30 18" className="h-[18px] w-[30px]"><rect x=".5" y=".5" width="29" height="17" rx="1" fill="#fff" stroke="#23405f" /><path d="M3.500 3.500h23v11h-23zM3.500 7h23M3.500 10.500h23M7.500 3.500v7M11.500 3.500v7M15.500 3.500v7M19.500 3.500v7M23.500 3.500v7M8.500 11v3M21.500 11v3" fill="none" stroke="#23405f" /></svg>
        </button>
        <button aria-label="Show hidden icons" className="ml-[13px] border-x-4 border-b-4 border-x-transparent border-b-white" />
        <button aria-label="Action center" className="ml-[14px]">
          <svg viewBox="0 0 16 16" className="h-4 w-4"><path d="M1 1v15" stroke="#fff" strokeWidth="2" /><path d="M3 2c4-1 5 2 11 0v7c-5 2-7-1-11 0z" fill="#fff" stroke="#23405f" strokeWidth=".7" /><circle cx="11" cy="11" r="4.500" fill="#d9342b" /><path d="M9 9l4 4M13 9l-4 4" stroke="#fff" strokeWidth="1.400" /></svg>
        </button>
        <button aria-label="Battery" className="ml-[14px]">
          <svg viewBox="0 0 10 16" className="h-4 w-[10px]"><path d="M3 .5h4v2h2.500v13h-9v-13H3z" fill="#fff" stroke="#23405f" /><path d="M2.500 4.500h5v9h-5z" fill="#fff" stroke="#23405f" /><path d="M3 5h4v5H3z" fill="#4f87c0" /></svg>
        </button>
        <button aria-label="Volume" className="ml-[10px]">
          <svg viewBox="0 0 14 16" className="h-4 w-[14px]"><path d="M.5 5.500H3L8 .8v14.400L3 10.500H.5z" fill="#fff" stroke="#23405f" strokeWidth=".8" /><path d="M10.500 5q2 3 0 6" fill="none" stroke="#fff" strokeWidth="1.500" /></svg>
        </button>
        <button aria-label="Network" className="ml-2">
          <svg viewBox="0 0 17 14" className="h-[14px] w-[17px]" fill="#fff" stroke="#23405f" strokeWidth=".5"><path d="M0 10h3v3H0zM3.500 8h3v5h-3zM7 6h3v7H7zM10.500 4h3v9h-3zM14 1h3v12h-3z" /></svg>
        </button>
        <time className="ml-[15px] text-center text-[11px] leading-[17px]">7:37 PM<br />9/17/2018</time>
      </div>
    </div>
  );
}

export default function App() {
  return (
    <div className="flex h-screen flex-col overflow-hidden bg-white font-['Open_Sans','Noto_Sans',sans-serif]">
      <TabStrip />
      <Toolbar />
      <div className="flex min-h-0 flex-1">
        <div className="flex min-w-0 flex-1 flex-col">
          <RepoHeader />
          <div className="flex min-h-0 flex-1">
            <Sidebar />
            <Main />
          </div>
        </div>
        <ScrollRail />
      </div>
      <Downloads />
      <Taskbar />
    </div>
  );
}
